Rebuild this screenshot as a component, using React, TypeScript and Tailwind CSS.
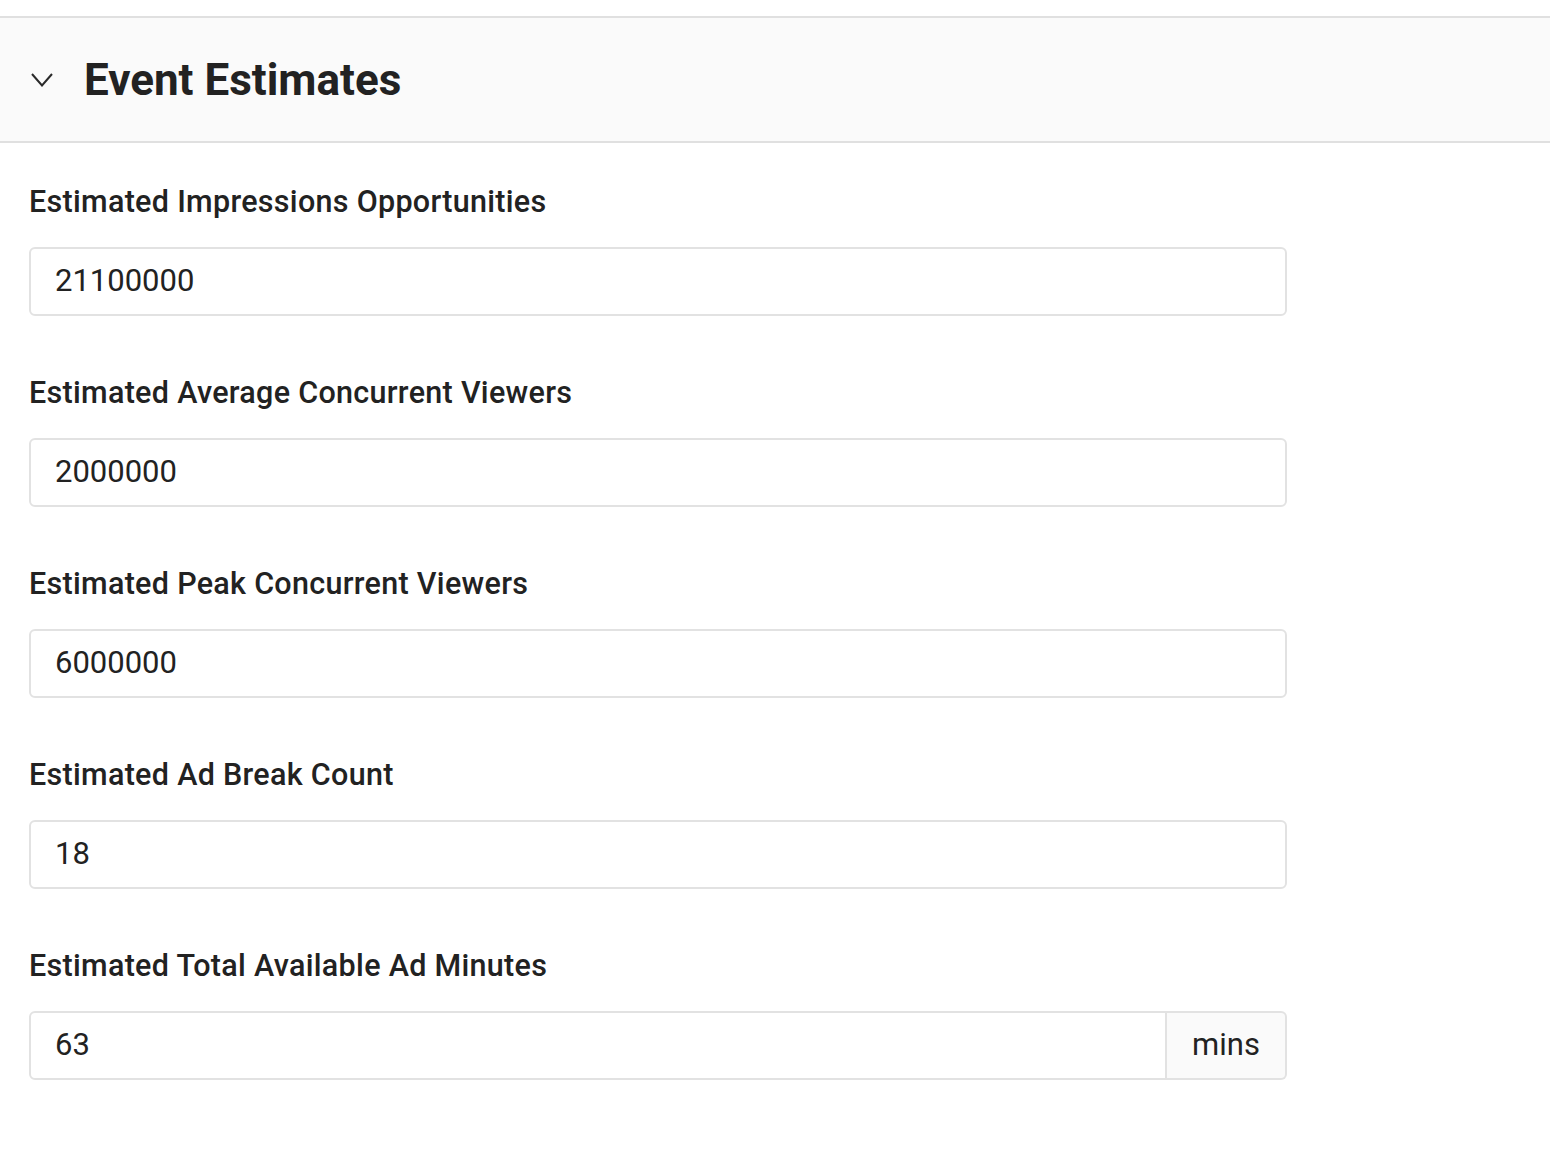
import React from "react";

const fields: { label: string; value: string; suffix?: string }[] = [
  { label: "Estimated Impressions Opportunities", value: "21100000" },
  { label: "Estimated Average Concurrent Viewers", value: "2000000" },
  { label: "Estimated Peak Concurrent Viewers", value: "6000000" },
  { label: "Estimated Ad Break Count", value: "18" },
  { label: "Estimated Total Available Ad Minutes", value: "63", suffix: "mins" },
];

export default function App() {
  return (
    <div className="min-h-[1170px] w-[1550px] bg-white text-[#222] pt-4" style={{ fontFamily: "Roboto, 'Noto Sans', sans-serif" }}>
      <div className="border-t-2 border-b-2 border-[#e0e0e0] bg-[#fafafa] h-[127px] flex items-center">
        <svg width="22" height="14" viewBox="0 0 22 14" className="ml-[31px] mt-[1px]">
          <polyline points="1,1 11,12.5 21,1" fill="none" stroke="#2a2a2a" strokeWidth="2" />
        </svg>
        <h1 className="ml-[31px] text-[44px] font-bold leading-none">Event Estimates</h1>
      </div>
      <div className="pl-[29px] pt-[39px] flex flex-col gap-[57px]">
        {fields.map((f) => (
          <div key={f.label} className="flex flex-col">
            <div className="text-[30.5px] font-medium leading-[40px] h-[40px] tracking-[0.3px]">{f.label}</div>
            <div className="mt-[25px] flex w-[1258px] h-[69px]">
              <div
                className={`flex-1 flex items-center border-2 border-[#e2e2e2] bg-white pl-[24px] pb-[3px] text-[31px] leading-none ${
                  f.suffix ? "rounded-l-[6px]" : "rounded-[6px]"
                }`}
              >
                {f.value}
              </div>
              {f.suffix && (
                <div className="w-[120px] flex items-center justify-center pb-[3px] border-2 border-l-0 border-[#e2e2e2] bg-[#fafafa] rounded-r-[6px] text-[31px] leading-none">
                  {f.suffix}
                </div>
              )}
            </div>
          </div>
        ))}
      </div>
    </div>
  );
}
